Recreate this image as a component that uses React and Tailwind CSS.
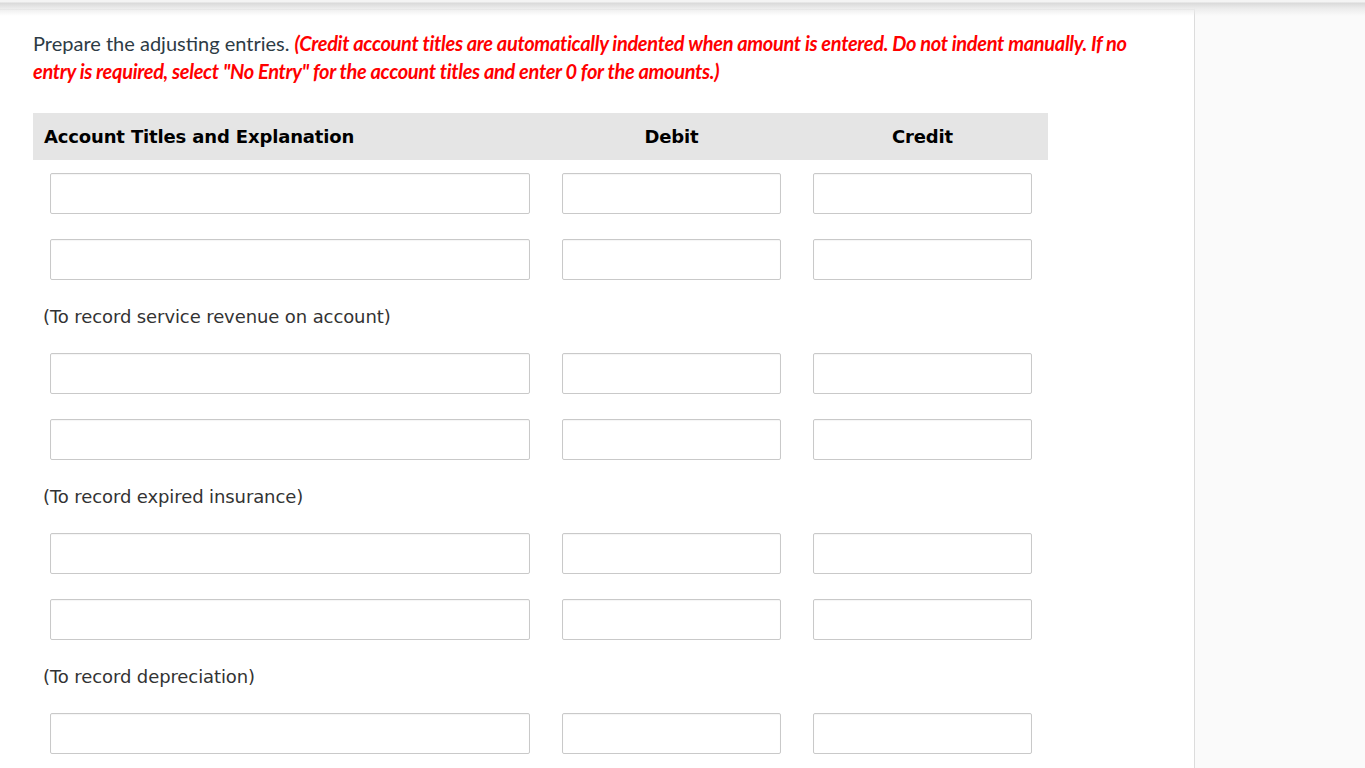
import React from 'react';

const entries = [
  'To record service revenue on account',
  'To record expired insurance',
  'To record depreciation',
];

const Box = () => (
  <input
    type="text"
    className="h-[41px] w-full rounded-[2px] border border-[#c9c9c9] bg-white shadow-[inset_0_1px_1px_rgba(0,0,0,0.04)] outline-none"
  />
);

const InputRow = () => (
  <div className="flex h-[66px] pt-[13px]">
    <div className="w-[513px] pl-[17px] pr-[16px]">
      <Box />
    </div>
    <div className="w-[251px] px-[16px]">
      <Box />
    </div>
    <div className="w-[251px] px-[16px]">
      <Box />
    </div>
  </div>
);

export default function App() {
  return (
    <div className="relative min-h-[768px] w-full bg-[#fafafa]">
      {/* top shadow strip */}
      <div className="pointer-events-none absolute left-0 right-0 top-0 z-10 h-[16px] [background-image:linear-gradient(to_bottom,#f4f4f4_0px,#f4f4f4_2px,#d9d9d9_3px,#ebebeb_8px,rgba(250,250,250,0)_16px)]" />
      <div className="flex">
        <div className="min-h-[768px] w-[1195px] border-r border-[#dcdcdc] bg-white">
          <div className="mt-[9px] h-px w-full bg-[#dddddd]" />
          <div className="pl-[33px] pr-[52px] pt-[19px]">
            <p className="[font-family:'Lato',sans-serif] text-[20px] leading-[28px] text-[#2d3b45]">
              Prepare the adjusting entries.{' '}
              <span className="font-bold italic tracking-[-0.32px] text-[#ff0000]">
                (Credit account titles are automatically indented when amount is entered. Do not indent manually. If no entry is required, select "No Entry" for the account titles and enter 0 for the amounts.)
              </span>
            </p>

            <div className="mt-[28px] w-[1015px] [font-family:'DejaVu_Sans',sans-serif]">
              <div className="flex h-[47px] items-center bg-[#e5e5e5] text-[18px] font-bold tracking-[-0.15px] text-black">
                <div className="w-[513px] pl-[11px]">Account Titles and Explanation</div>
                <div className="w-[251px] text-center">Debit</div>
                <div className="w-[251px] text-center">Credit</div>
              </div>

              {entries.map((label) => (
                <div key={label}>
                  <InputRow />
                  <InputRow />
                  <div className="flex h-[48px] items-center pl-[10px] pt-[1px] text-[18px] tracking-[-0.1px] text-[#333333]">
                    ({label})
                  </div>
                </div>
              ))}
              <InputRow />
            </div>
          </div>
        </div>
        <div className="flex-1" />
      </div>
    </div>
  );
}
